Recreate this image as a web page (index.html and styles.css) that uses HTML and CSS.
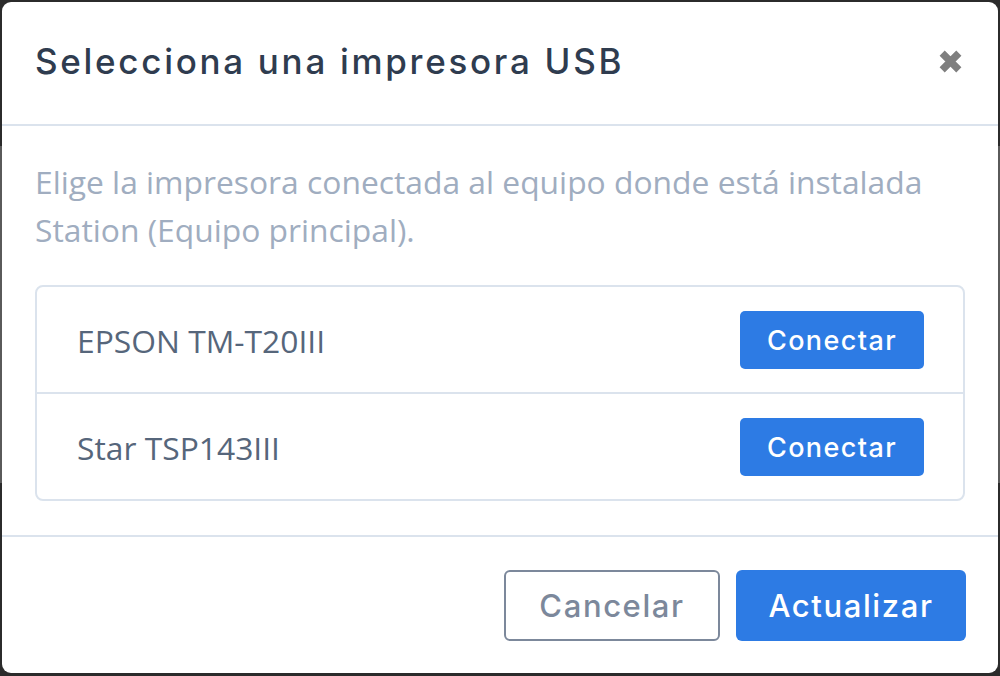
FILE: index.html
```html
<!DOCTYPE html>
<html lang="es">
<head>
<meta charset="utf-8">
<title>Selecciona una impresora USB</title>
<link rel="stylesheet" href="styles.css">
</head>
<body>
<div class="modal">
  <header class="modal-header">
    <h1 class="modal-title">Selecciona una impresora USB</h1>
    <button class="close-btn" aria-label="Cerrar">
      <svg width="25" height="25" viewBox="0 0 24 24"><path d="M4 4 L20 20 M20 4 L4 20" stroke="#7f7f7f" stroke-width="7" fill="none"/></svg>
    </button>
  </header>
  <section class="modal-body">
    <p class="desc">Elige la impresora conectada al equipo donde está instalada Station (Equipo principal).</p>
    <ul class="printer-list">
      <li class="printer-row"><span class="printer-name">EPSON TM-T20III</span><button class="btn btn-primary btn-sm">Conectar</button></li>
      <li class="printer-row"><span class="printer-name">Star TSP143III</span><button class="btn btn-primary btn-sm">Conectar</button></li>
    </ul>
  </section>
  <footer class="modal-footer">
    <button class="btn btn-outline btn-lg">Cancelar</button>
    <button class="btn btn-primary btn-lg btn-wide">Actualizar</button>
  </footer>
</div>
</body>
</html>
```
FILE: styles.css
```css
* { box-sizing: border-box; }
html, body { margin: 0; padding: 0; }
body {
  width: 1000px;
  height: 676px;
  overflow: hidden;
  background: linear-gradient(to bottom, #2b2b2b 0, #2b2b2b 146px, #5a5a5a 146px, #5a5a5a 483px, #2b2b2b 483px);
  padding: 2px 2px 3px 2px;
}
.modal {
  width: 996px;
  height: 671px;
  background: #fff;
  border-radius: 9px;
  display: flex;
  flex-direction: column;
  overflow: hidden;
}
.modal-header {
  height: 124px;
  flex: none;
  border-bottom: 2px solid #dbe3ed;
  display: flex;
  align-items: center;
  justify-content: space-between;
  padding: 0 35px 4px 33px;
}
.modal-title {
  margin: 0;
  font-family: "Inter", "Noto Sans", sans-serif;
  font-weight: 500;
  font-size: 35px;
  color: #2f3c4f;
  letter-spacing: 2.7px;
}
.close-btn {
  border: 0;
  background: none;
  padding: 0;
  width: 25px;
  height: 25px;
  display: flex;
}
.modal-body {
  flex: none;
  padding: 32px 33px 34px 33px;
  border-bottom: 2px solid #dbe3ed;
}
.desc {
  margin: 0 0 31px 0;
  font-family: "Open Sans", sans-serif;
  font-size: 31.8px;
  line-height: 48px;
  color: #a0adc0;
}
.printer-list {
  list-style: none;
  margin: 0;
  padding: 0;
  border: 2px solid #dbe3ed;
  border-radius: 8px;
}
.printer-row {
  display: flex;
  align-items: center;
  justify-content: space-between;
  padding: 24px 39px 23px 40px;
}
.printer-row + .printer-row { border-top: 2px solid #dbe3ed; }
.printer-name {
  font-family: "Open Sans", sans-serif;
  font-size: 31.8px;
  color: #56667b;
}
.btn {
  font-family: "Inter", "Noto Sans", sans-serif;
  font-weight: 500;
  border-radius: 5px;
  display: flex;
  align-items: center;
  justify-content: center;
  padding: 0;
}
.btn-primary {
  background: #2d7be4;
  border: 0;
  color: #fff;
}
.btn-outline {
  background: #fff;
  border: 2px solid #7c889b;
  color: #7c889b;
}
.btn-sm {
  width: 184px;
  height: 58px;
  font-size: 27px;
  letter-spacing: 1.4px;
}
.btn-lg {
  width: 216px;
  height: 71px;
  font-size: 31px;
  letter-spacing: 1.6px;
  border-radius: 6px;
}
.btn-wide { width: 230px; }
.modal-footer {
  flex: 1;
  display: flex;
  align-items: center;
  justify-content: flex-end;
  gap: 16px;
  padding: 0 32px 0 0;
}
```
